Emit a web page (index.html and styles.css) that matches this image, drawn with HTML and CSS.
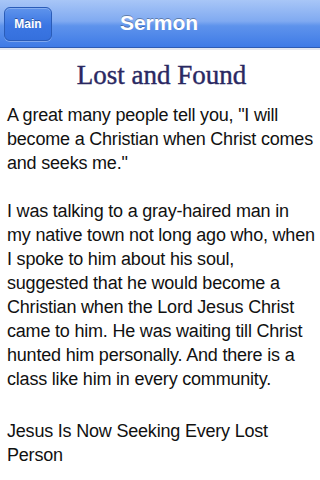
FILE: index.html
```html
<!DOCTYPE html>
<html>
<head>
<meta charset="utf-8">
<link rel="stylesheet" href="styles.css">
</head>
<body>
<header class="navbar">
  <button class="back">Main</button>
  <h1 class="nav-title">Sermon</h1>
</header>
<main class="content">
  <h2 class="heading">Lost and Found</h2>
  <p>A great many people tell you, "I will become a Christian when Christ comes and seeks me."</p>
  <p class="long">I was talking to a gray-haired man in my native town not long ago who, when I spoke to him about his soul, suggested that he would become a Christian when the Lord Jesus Christ came to him. He was waiting till Christ hunted him personally. And there is a class like him in every community.</p>
  <p>Jesus Is Now Seeking Every Lost Person</p>
</main>
</body>
</html>
```
FILE: styles.css
```css
html, body {
  margin: 0;
  padding: 0;
  background: #fff;
}
body {
  width: 320px;
  height: 480px;
  overflow: hidden;
  font-family: "Liberation Sans", Arial, sans-serif;
}
.navbar {
  position: relative;
  height: 47px;
  background: linear-gradient(#a8c6f7 0%, #80aaf1 45%, #5e93ec 55%, #3f7be6 100%);
  border-bottom: 1px solid #2d5cb5;
  display: flex;
  align-items: center;
  justify-content: center;
}
.back {
  position: absolute;
  left: 4px;
  top: 7px;
  width: 48px;
  height: 34px;
  border: 1px solid #2a5cb8;
  border-radius: 6px;
  background: linear-gradient(#5f94ec, #3b76e3 55%, #3570dd);
  box-shadow: inset 0 1px 0 rgba(255,255,255,0.25), 0 1px 0 rgba(255,255,255,0.3);
  color: #fff;
  font-family: "Liberation Sans", Arial, sans-serif;
  font-weight: bold;
  font-size: 12px;
  text-shadow: 0 -1px 0 rgba(0,0,0,0.35);
  padding: 0;
}
.nav-title {
  margin: 0 0 1px -2px;
  color: #fff;
  font-size: 21px;
  font-weight: bold;
  text-shadow: 0 -1px 0 rgba(0,0,0,0.3);
}
.content {
  border-top: 2px solid #e4e8f0;
  padding: 0 4px 0 7px;
  color: #111;
  font-size: 18px;
  letter-spacing: -0.2px;
  line-height: 24px;
}
.heading {
  margin: 7px 0 10px;
  text-align: center;
  font-family: "Liberation Serif", "Times New Roman", serif;
  font-weight: normal;
  font-size: 27px;
  letter-spacing: 0;
  line-height: 36px;
  color: #2a2862;
  -webkit-text-stroke: 0.4px #2a2862;
}
.content p {
  margin: 0 0 24px;
}
.content p.long {
  margin-bottom: 28px;
}
```
